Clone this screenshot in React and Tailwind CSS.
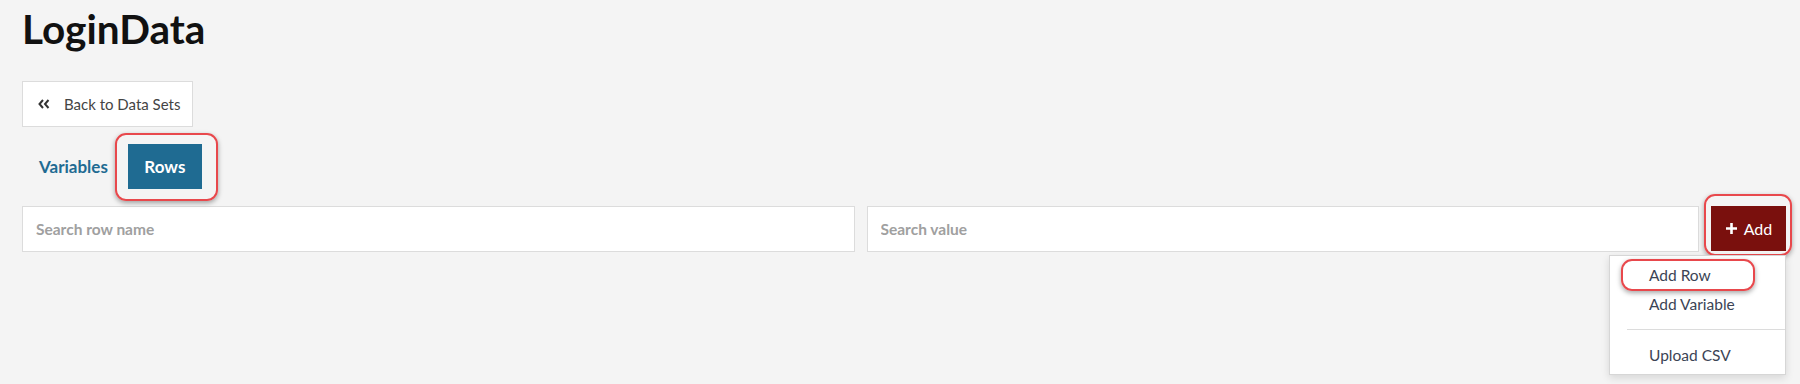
import React from 'react';

const Highlight = ({ className }) => (
  <span
    className={`pointer-events-none absolute rounded-[11px] border-2 border-[#e8484c] shadow-[0_2px_5px_rgba(0,0,0,0.35)] ${className}`}
  />
);

const App = () => {
  return (
    <div className="min-h-screen bg-[#f4f4f4] pl-[22px] pr-[14px] pt-[5px] font-['Lato','Open_Sans',sans-serif] text-[#333]">
      {/* Title */}
      <h1 className="text-[40.5px] font-bold leading-[48px] text-[#111]">LoginData</h1>

      {/* Back */}
      <button
        type="button"
        className="mt-[28px] flex h-[46px] w-[171px] items-center gap-[14px] border border-[#dcdcdc] bg-white pl-[14px] text-[15px] text-[#444]"
      >
        <svg width="12" height="10" viewBox="0 0 12 10" className="ml-[1px]">
          <path d="M5 1 1.5 5 5 9M10.5 1 7 5l3.5 4" fill="none" stroke="#333" strokeWidth="2" />
        </svg>
        Back to Data Sets
      </button>

      {/* Tabs */}
      <div className="mt-[17px] flex items-center gap-[3px]">
        <button type="button" className="h-[45px] px-[17px] text-[17px] font-bold text-[#1f6b92]">
          Variables
        </button>
        <div className="relative">
          <Highlight className="-left-[13px] -right-[16px] -top-[11px] -bottom-[12px]" />
          <button type="button" className="h-[45px] w-[74px] bg-[#1f6b92] text-[17px] font-bold text-white">
            Rows
          </button>
        </div>
      </div>

      {/* Search row */}
      <div className="mt-[17px] flex gap-[12px]">
        <input
          placeholder="Search row name"
          className="h-[46px] flex-1 border border-[#dcdcdc] bg-white px-[13px] text-[15.5px] font-bold outline-none placeholder:text-[#a0a0a0]"
        />
        <input
          placeholder="Search value"
          className="h-[46px] flex-1 border border-[#dcdcdc] bg-white px-[13px] text-[15.5px] font-bold outline-none placeholder:text-[#a0a0a0]"
        />
        <div className="relative">
          <Highlight className="-left-[7px] -right-[6px] -top-[12px] -bottom-[4px]" />
          <button
            type="button"
            className="flex h-[45px] w-[75px] items-center justify-center gap-[6px] bg-[#7a100d] text-[16px] text-white"
          >
            <svg width="13" height="13" viewBox="0 0 13 13">
              <path d="M6.5 1v11M1 6.5h11" stroke="#fff" strokeWidth="2.6" />
            </svg>
            Add
          </button>

          {/* Dropdown */}
          <div className="absolute right-0 top-[49px] z-10 w-[177px] border border-[#d6d6d6] bg-white pb-[4px] pt-[5px] shadow-[0_3px_8px_rgba(0,0,0,0.12)]">
            <div className="relative">
              <Highlight className="left-[11px] w-[134px] -top-[2px] h-[32px] rounded-[6px]" />
              <div className="pl-[39px] text-[15.5px] leading-[29px] text-[#3b4455]">Add Row</div>
            </div>
            <div className="pl-[39px] text-[15.5px] leading-[29px] text-[#3b4455]">Add Variable</div>
            <div className="ml-[17px] mb-[11px] mt-[10px] h-px bg-[#dcdcdc]" />
            <div className="pl-[39px] text-[15.5px] leading-[29px] text-[#3b4455]">Upload CSV</div>
          </div>
        </div>
      </div>
    </div>
  );
};

export default App;
